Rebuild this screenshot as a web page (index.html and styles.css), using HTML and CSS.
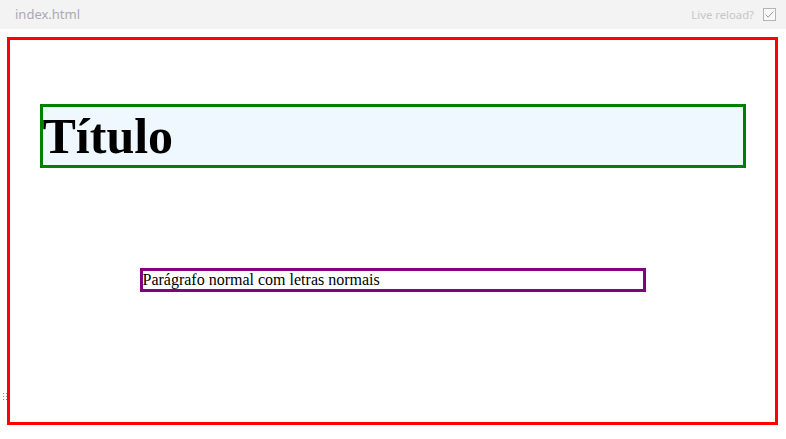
FILE: index.html
```html
<!DOCTYPE html>
<html lang="pt">
<head>
<meta charset="utf-8">
<title>index.html</title>
<link rel="stylesheet" href="styles.css">
</head>
<body>
<header class="topbar">
  <span class="filename">index.html</span>
  <label class="reload">
    <span>Live reload?</span>
    <svg class="check" width="13" height="13" viewBox="0 0 13 13" aria-hidden="true">
      <rect x="0.5" y="0.5" width="12" height="12" fill="#f8f8f8" stroke="#b4b4b4"/>
      <path d="M2.6 6.6 L5.2 9.2 L10.4 3.4" fill="none" stroke="#9a9a9a" stroke-width="1"/>
    </svg>
  </label>
</header>
<main class="frame">
  <h1 class="title">Título</h1>
  <p class="para">Parágrafo normal com letras normais</p>
</main>
<div class="grip" aria-hidden="true"></div>
</body>
</html>
```
FILE: styles.css
```css
html, body {
  margin: 0;
  padding: 0;
  background: #ffffff;
}

body {
  width: 786px;
  height: 439px;
  overflow: hidden;
  position: relative;
  font-family: "Liberation Serif", "Times New Roman", serif;
}

.topbar {
  height: 29px;
  background: #f3f3f3;
  display: flex;
  align-items: center;
  justify-content: space-between;
  padding: 0 10px 0 15px;
  box-sizing: border-box;
  font-family: "Noto Sans", "Open Sans", sans-serif;
}

.filename {
  font-size: 13px;
  color: #a9a9b6;
  margin-top: -2px;
}

.reload {
  display: flex;
  align-items: center;
  gap: 9px;
  font-size: 11.3px;
  color: #c6c6c6;
}

.check {
  display: block;
}

.frame {
  margin: 8px 8px 0 7px;
  border: 3px solid #ff0000;
  height: 382px;
  overflow: hidden;
}

.title {
  width: 700px;
  margin: 64px auto 0;
  border: 3px solid #008000;
  background: #eff7ff;
  font-size: 50px;
  line-height: 58px;
  font-weight: bold;
  padding: 0;
}

.para {
  width: 500px;
  margin: 100px auto 0;
  border: 3px solid #800080;
  font-size: 16px;
  line-height: 18px;
}

.grip {
  position: absolute;
  left: 2px;
  top: 392px;
  width: 6px;
  height: 9px;
  background-image: radial-gradient(circle, #8a8a8a 0.7px, transparent 1px);
  background-size: 3px 3px;
}
```
